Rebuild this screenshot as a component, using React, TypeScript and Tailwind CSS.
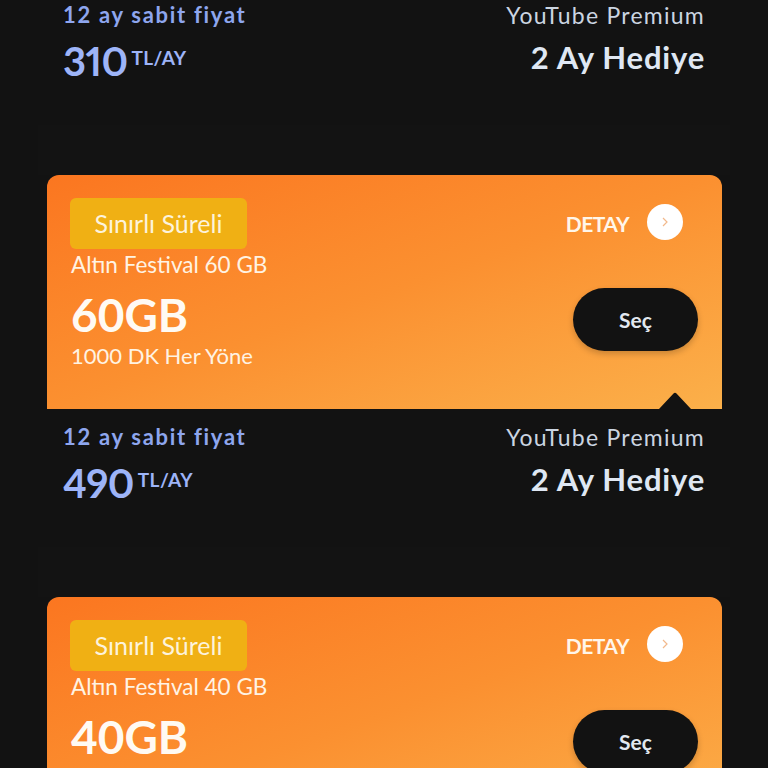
import React from 'react';

interface Plan {
  gb: number;
  price: number;
}

const PlanInfo: React.FC<{ price: number }> = ({ price }) => {
  return (
    <div className="flex h-[138px] justify-between pl-[63px] pr-[63px] pt-[13px]">
      <div>
        <div className="text-[22px] font-bold leading-[30px] tracking-[1.7px] text-[#8ea6ee]">12 ay sabit fiyat</div>
        <div className="mt-[9px] flex items-start gap-[4px]">
          <span className="text-[40px] font-bold leading-[44px] tracking-[-0.6px] text-[#9db4f8] proportional-nums">{price}</span>
          <span className="mt-[7px] text-[19px] font-bold leading-[24px] tracking-[0.4px] text-[#9db4f8]">TL/AY</span>
        </div>
      </div>
      <div className="text-right">
        <div className="text-[23px] leading-[30px] tracking-[1.25px] text-[#cbd5e1]">YouTube Premium</div>
        <div className="mt-[9px] text-[31px] font-bold leading-[36px] tracking-[0.8px] text-[#dfe7f3]">2 Ay Hediye</div>
      </div>
    </div>
  );
};

const PlanCard: React.FC<{ plan: Plan; last?: boolean }> = ({ plan, last }) => {
  return (
    <div>
      <div className="relative ml-[47px] flex h-[234px] w-[675px] justify-between rounded-t-[12px] bg-gradient-to-br from-[#fb7620] via-[#fb9030] to-[#fbb04a] pl-[23px] pr-[24px] pt-[23px]">
        <div>
          <div className="flex h-[51px] w-[177px] items-center justify-center rounded-[6px] bg-[#f0b014] text-[25px] text-[#fdf3dc]">
            Sınırlı Süreli
          </div>
          <div className="pl-px">
            <div className="mt-px text-[22.5px] leading-[30px] text-[#fff3e3]">Altın Festival {plan.gb} GB</div>
            <div className="mt-[12px] text-[46px] font-bold leading-[46px] text-[#fffaf3]">{plan.gb}GB</div>
            {!last && <div className="mt-[3px] text-[22px] leading-[30px] text-[#fff3e3]">1000 DK Her Yöne</div>}
          </div>
        </div>
        <div className="flex flex-col items-end">
          <div className="mr-[15px] mt-[6px] flex h-[36px] items-center gap-[18px]">
            <span className="pt-[3px] text-[21px] font-bold tracking-[-0.5px] text-[#fff6ea]">DETAY</span>
            <span className="flex h-[36px] w-[36px] items-center justify-center rounded-full bg-white">
              <svg width="12" height="12" viewBox="0 0 12 12" fill="none" stroke="#f2b98c" strokeWidth="1.2">
                <path d="M4 2l4 4-4 4" />
              </svg>
            </span>
          </div>
          <button className="mt-[48px] flex h-[63px] w-[125px] items-center justify-center rounded-full bg-[#121212] text-[21px] font-bold text-[#e2e8f0] shadow-[0_3px_6px_rgba(0,0,0,0.2)]">
            Seç
          </button>
        </div>
        <svg className="absolute bottom-0 right-[30px]" width="34" height="17" viewBox="0 0 34 17" fill="#121212">
          <path d="M1 17L15.5 1.5a2 2 0 0 1 3 0L33 17z" />
        </svg>
      </div>
      {!last && <PlanInfo price={plan.price} />}
    </div>
  );
};

const Gap: React.FC = () => <div className="mx-[38px] h-[50px] bg-[#131313]" />;

const App: React.FC = () => {
  return (
    <div className="h-[768px] w-[768px] overflow-hidden bg-[#121212] font-['Lato',sans-serif]">
      <div className="mt-[-13px]">
        <PlanInfo price={310} />
        <Gap />
        <PlanCard plan={{ gb: 60, price: 490 }} />
        <Gap />
        <PlanCard plan={{ gb: 40, price: 390 }} last />
      </div>
    </div>
  );
};

export default App;
